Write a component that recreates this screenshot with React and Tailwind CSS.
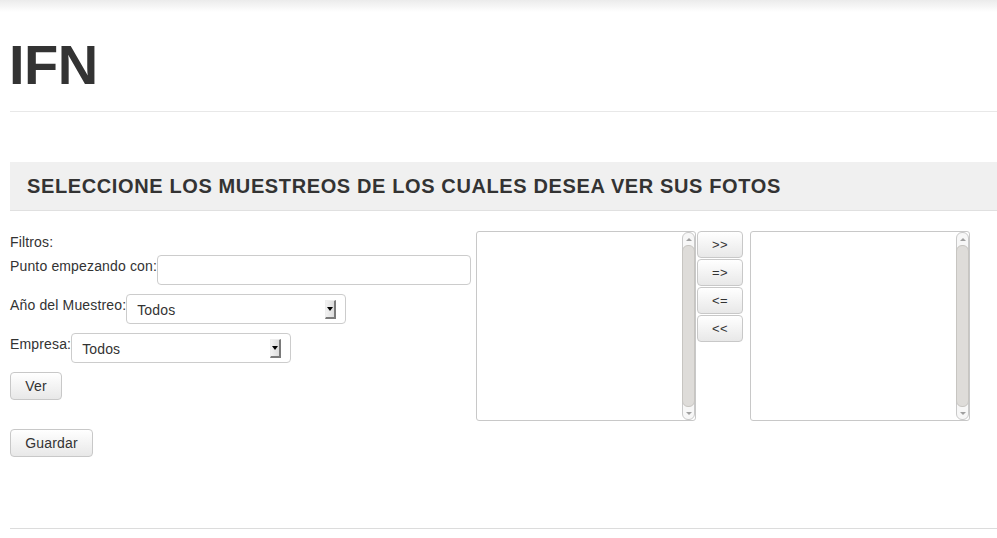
import React from "react";

const font = { fontFamily: '"Liberation Sans", Arial, sans-serif' };

function Arrow({ dir }) {
  return (
    <div className="h-[12px] flex items-center justify-center">
      {dir === "up" ? (
        <div className="w-0 h-0 border-l-[3px] border-r-[3px] border-b-[3px] border-l-transparent border-r-transparent border-b-[#a0a0a0]" />
      ) : (
        <div className="w-0 h-0 border-l-[3px] border-r-[3px] border-t-[3px] border-l-transparent border-r-transparent border-t-[#a0a0a0]" />
      )}
    </div>
  );
}

function ListBox() {
  return (
    <div className="w-[220px] h-[190px] border border-[#c8c8c8] rounded-[3px] bg-white flex justify-end">
      <div className="w-[13px] h-full border border-[#c9c9c9] rounded-[6px] bg-[#f7f7f7] flex flex-col">
        <Arrow dir="up" />
        <div className="flex-1 bg-[#dedcd9] border border-[#c7c5c1] rounded-[6px] -mx-[1px]" />
        <Arrow dir="down" />
      </div>
    </div>
  );
}

function Btn({ children, className = "" }) {
  return (
    <div
      className={
        "flex items-center justify-center border border-[#c8c8c8] rounded-[4px] bg-[linear-gradient(#ffffff,#e8e8e8)] text-[#333] " +
        className
      }
    >
      {children}
    </div>
  );
}

function Select({ w }) {
  return (
    <div className={"h-[30px] border border-[#ccc] rounded-[4px] bg-white flex items-center pl-[10px] pr-[9px] " + w}>
      <span className="flex-1 text-[14px] tracking-[0.15px] text-[#333] pt-[1px]">Todos</span>
      <div className="w-[11px] h-[19px] bg-[linear-gradient(90deg,#f2f2f2,#dcdcdc)] border-r-2 border-b-2 border-r-[#7a7a7a] border-b-[#7a7a7a] border-l border-t border-l-[#eee] border-t-[#eee] flex items-center justify-center">
        <div className="w-0 h-0 border-l-[3px] border-r-[3px] border-t-[4px] border-l-transparent border-r-transparent border-t-black" />
      </div>
    </div>
  );
}

export default function App() {
  return (
    <div
      style={font}
      className="w-[997px] h-[538px] overflow-hidden bg-[linear-gradient(#ebebeb,#ffffff_12px)] text-[#333] pl-[10px]"
    >
      <div className="pt-[34px] h-[96px]">
        <h1 className="text-[56px] leading-[62px] tracking-[-0.5px] font-bold text-[#333] -ml-[1px]">IFN</h1>
      </div>
      <div className="mt-[15px] h-px bg-[#e8e8e8]" />
      <div className="mt-[50px] h-[49px] bg-[#f0f0f0] border-b border-[#e0e0e0] flex items-center pl-[17px]">
        <h2 className="text-[20px] leading-[24px] tracking-[0.62px] font-bold text-[#333]">
          SELECCIONE LOS MUESTREOS DE LOS CUALES DESEA VER SUS FOTOS
        </h2>
      </div>
      <div className="mt-[20px] flex items-start h-[297px]">
        <div className="w-[466px] flex flex-col text-[14px] leading-[20px] tracking-[0.15px]">
          <div className="mt-[1px]">Filtros:</div>
          <div className="mt-[3px] flex items-start">
            <span className="pt-[1px]">Punto empezando con:</span>
            <div className="w-[314px] h-[30px] border border-[#ccc] rounded-[4px] bg-white" />
          </div>
          <div className="mt-[9px] flex items-start">
            <span className="pt-[1px]">Año del Muestreo:</span>
            <Select w="w-[220px]" />
          </div>
          <div className="mt-[9px] flex items-start">
            <span className="pt-[1px]">Empresa:</span>
            <Select w="w-[220px]" />
          </div>
          <div className="mt-[9px] flex">
            <Btn className="w-[52px] h-[28px] text-[14px]">Ver</Btn>
          </div>
          <div className="mt-[29px] flex">
            <Btn className="w-[83px] h-[28px] text-[14px]">Guardar</Btn>
          </div>
        </div>
        <ListBox />
        <div className="w-[46px] flex flex-col gap-[1px] ml-[1px]">
          <Btn className="h-[27px] text-[13px] tracking-[0.5px]">&gt;&gt;</Btn>
          <Btn className="h-[27px] text-[13px] tracking-[0.5px]">=&gt;</Btn>
          <Btn className="h-[27px] text-[13px] tracking-[0.5px]">&lt;=</Btn>
          <Btn className="h-[27px] text-[13px] tracking-[0.5px]">&lt;&lt;</Btn>
        </div>
        <div className="ml-[7px]">
          <ListBox />
        </div>
      </div>
      <div className="h-px bg-[#dcdcdc]" />
    </div>
  );
}
